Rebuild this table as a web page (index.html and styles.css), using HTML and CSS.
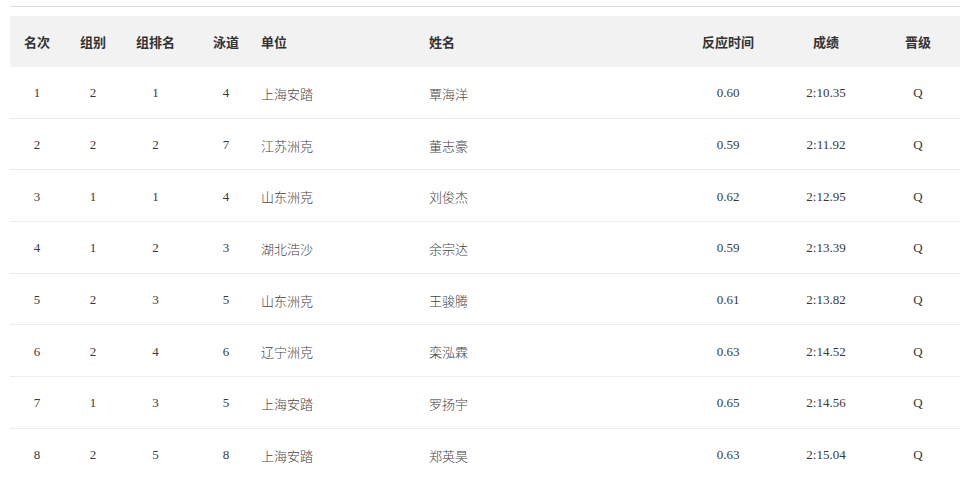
FILE: index.html
```html
<!DOCTYPE html>
<html lang="zh">
<head>
<meta charset="utf-8">
<title>成绩</title>
<link rel="stylesheet" href="styles.css">
</head>
<body>
<div class="wrap">
  <div class="topline"></div>
  <table class="results">
    <colgroup>
      <col class="c1"><col class="c2"><col class="c3"><col class="c4"><col class="c5"><col class="c6"><col class="c7"><col class="c8"><col class="c9">
    </colgroup>
    <thead>
      <tr>
        <th>名次</th><th>组别</th><th>组排名</th><th class="lane">泳道</th><th class="left">单位</th><th class="left">姓名</th><th>反应时间</th><th>成绩</th><th>晋级</th>
      </tr>
    </thead>
    <tbody>
      <tr><td>1</td><td>2</td><td>1</td><td class="lane">4</td><td class="left cn">上海安踏</td><td class="left cn">覃海洋</td><td>0.60</td><td>2:10.35</td><td>Q</td></tr>
      <tr><td>2</td><td>2</td><td>2</td><td class="lane">7</td><td class="left cn">江苏洲克</td><td class="left cn">董志豪</td><td>0.59</td><td>2:11.92</td><td>Q</td></tr>
      <tr><td>3</td><td>1</td><td>1</td><td class="lane">4</td><td class="left cn">山东洲克</td><td class="left cn">刘俊杰</td><td>0.62</td><td>2:12.95</td><td>Q</td></tr>
      <tr><td>4</td><td>1</td><td>2</td><td class="lane">3</td><td class="left cn">湖北浩沙</td><td class="left cn">余宗达</td><td>0.59</td><td>2:13.39</td><td>Q</td></tr>
      <tr><td>5</td><td>2</td><td>3</td><td class="lane">5</td><td class="left cn">山东洲克</td><td class="left cn">王骏腾</td><td>0.61</td><td>2:13.82</td><td>Q</td></tr>
      <tr><td>6</td><td>2</td><td>4</td><td class="lane">6</td><td class="left cn">辽宁洲克</td><td class="left cn">栾泓霖</td><td>0.63</td><td>2:14.52</td><td>Q</td></tr>
      <tr><td>7</td><td>1</td><td>3</td><td class="lane">5</td><td class="left cn">上海安踏</td><td class="left cn">罗扬宇</td><td>0.65</td><td>2:14.56</td><td>Q</td></tr>
      <tr><td>8</td><td>2</td><td>5</td><td class="lane">8</td><td class="left cn">上海安踏</td><td class="left cn">郑英昊</td><td>0.63</td><td>2:15.04</td><td>Q</td></tr>
    </tbody>
  </table>
</div>
</body>
</html>
```
FILE: styles.css
```css
html, body {
  margin: 0;
  padding: 0;
  background: #ffffff;
}
body {
  font-family: "Liberation Serif", "Noto Sans CJK SC", serif;
  font-size: 13px;
  color: #3a3a3a;
}
.wrap {
  padding: 6px 0 0 10px;
  width: 950px;
}
.topline {
  height: 0;
  border-top: 1px solid #dddddd;
  margin-bottom: 9px;
}
.results {
  width: 950px;
  border-collapse: collapse;
  table-layout: fixed;
}
.c1 { width: 54px; }
.c2 { width: 58px; }
.c3 { width: 67px; }
.c4 { width: 62px; }
.c5 { width: 168px; }
.c6 { width: 261px; }
.c7 { width: 96px; }
.c8 { width: 100px; }
.c9 { width: 84px; }
.results th {
  background: #f2f2f2;
  height: 51px;
  padding: 0;
  font-family: "Noto Sans CJK SC", sans-serif;
  font-weight: bold;
  font-size: 13px;
  color: #333333;
  text-align: center;
}
.results td {
  height: 48.7px;
  padding: 2px 0 0 0;
  text-align: center;
  border-bottom: 1px solid #ececec;
  color: #3a3a3a;
}
.results tbody tr:last-child td {
  border-bottom: none;
}
.results .lane {
  padding-left: 12px;
}
.results .left {
  text-align: left;
  padding-left: 10px;
}
.results td.cn {
  font-family: "Noto Sans CJK SC", sans-serif;
  font-weight: 300;
  color: #444444;
}
```
